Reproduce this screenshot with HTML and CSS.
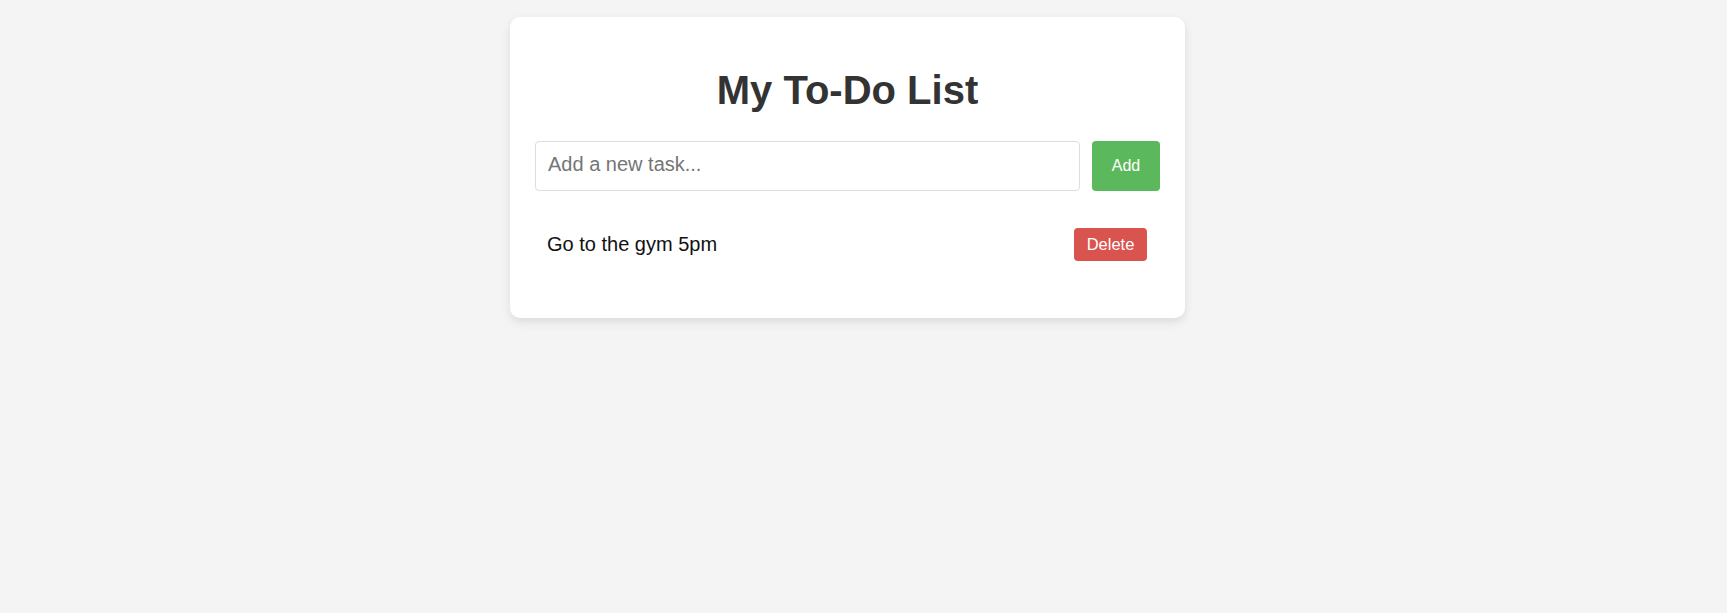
FILE: index.html
```html
<!DOCTYPE html>
<html lang="en">
<head>
<meta charset="utf-8">
<title>My To-Do List</title>
<link rel="stylesheet" href="styles.css">
</head>
<body>
  <main class="card">
    <h1 class="title">My To-Do List</h1>
    <div class="add-row">
      <input class="task-input" type="text" placeholder="Add a new task...">
      <button class="add-btn">Add</button>
    </div>
    <ul class="task-list">
      <li class="task">
        <span class="task-text">Go to the gym 5pm</span>
        <button class="delete-btn">Delete</button>
      </li>
    </ul>
  </main>
</body>
</html>
```

FILE: styles.css
```css
html, body {
  margin: 0;
  padding: 0;
}
body {
  background: #f4f4f4;
  font-family: "Liberation Sans", Arial, sans-serif;
  display: flex;
  justify-content: center;
  align-items: flex-start;
  padding: 17px 32px 0 0;
  min-height: 613px;
  box-sizing: border-box;
}
.card {
  width: 625px;
  background: #fff;
  border-radius: 10px;
  box-shadow: 0 4px 10px rgba(0, 0, 0, 0.1);
  padding: 25px 25px 25px;
}
.title {
  margin: 25px 0 28px;
  font-size: 40px;
  line-height: 46px;
  font-weight: bold;
  color: #333;
  text-align: center;
}
.add-row {
  display: flex;
  gap: 12px;
}
.task-input {
  flex: 1;
  height: 50px;
  box-sizing: border-box;
  padding: 0 12px 3px;
  border: 1px solid #ddd;
  border-radius: 4px;
  font-family: inherit;
  font-size: 20px;
  color: #333;
  outline: none;
}
.task-input::placeholder {
  color: #757575;
}
.add-btn {
  height: 50px;
  width: 68px;
  padding: 0;
  border: none;
  border-radius: 4px;
  background: #5cb85c;
  color: #fff;
  font-family: inherit;
  font-size: 16px;
  cursor: pointer;
}
.task-list {
  list-style: none;
  margin: 25px 0 20px;
  padding: 0;
}
.task {
  display: flex;
  align-items: center;
  justify-content: space-between;
  padding: 12px 13px 12px 12px;
}
.task-text {
  font-size: 20px;
  color: #111;
}
.delete-btn {
  height: 33px;
  width: 73px;
  padding: 0;
  border: none;
  border-radius: 4px;
  background: #d9534f;
  color: #fff;
  font-family: inherit;
  font-size: 16.5px;
  cursor: pointer;
}
```
